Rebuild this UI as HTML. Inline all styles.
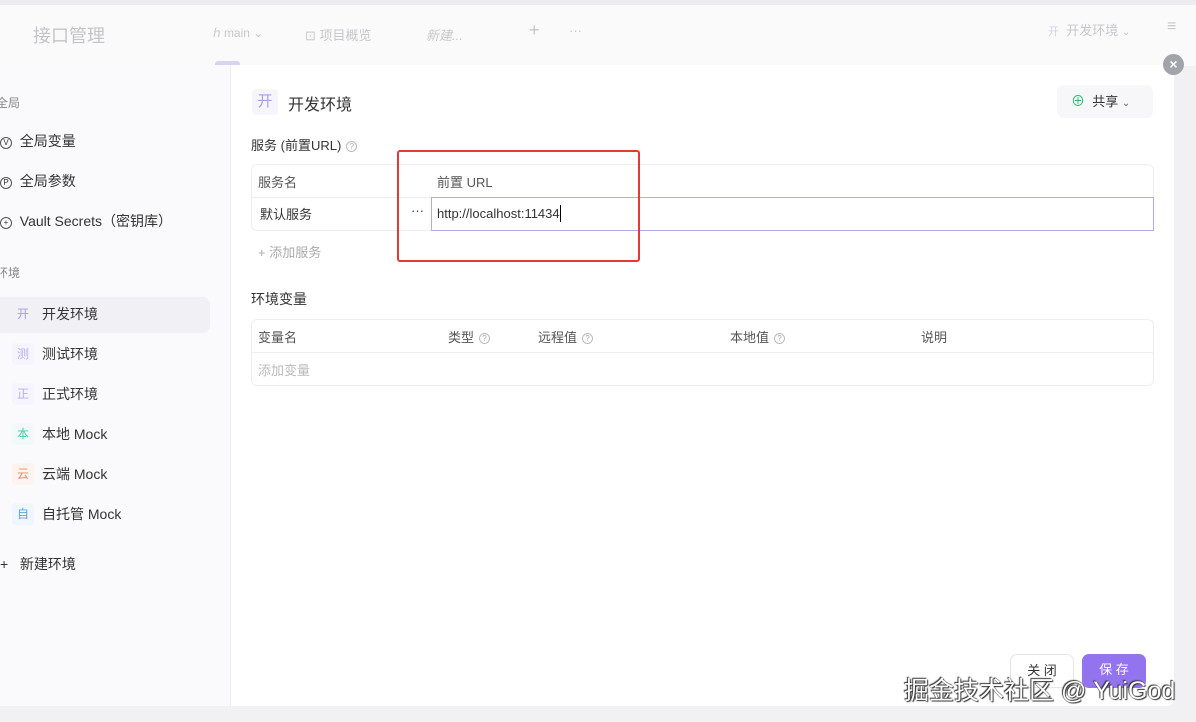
<!DOCTYPE html>
<html><head><meta charset="utf-8"><style>
*{box-sizing:border-box;margin:0;padding:0}
body{width:1196px;height:722px;overflow:hidden;background:#f1f1f3;font-family:"Liberation Sans","Noto Sans CJK SC",sans-serif;color:#333;position:relative}
.top{position:absolute;left:0;top:0;width:1196px;height:66px;background:#fafafb}
.top .strip{position:absolute;left:0;top:0;width:1196px;height:5px;background:#ececef}
.t{position:absolute;color:#c8c8cc;white-space:nowrap}
.modal{position:absolute;left:0;top:65px;width:1174px;height:641px;background:#fff;border-radius:0 0 8px 0}
.side{position:absolute;left:0;top:0;width:231px;height:641px;background:#fafafc;border-right:1px solid #eeeef0}
.s{position:absolute;font-size:14px;color:#333;white-space:nowrap}
.g{position:absolute;font-size:12px;color:#888}
.ic{position:absolute;font-size:12px;width:22px;height:22px;line-height:22px;text-align:center;border-radius:4px}
.sel{position:absolute;left:0;top:232px;width:210px;height:36px;background:#f1f1f5;border-radius:0 8px 8px 0}
.tbl{position:absolute;border:1px solid #eeeef0;border-radius:6px}
.h{position:absolute;font-size:13px;color:#555;white-space:nowrap}
.q{display:inline-block;width:11px;height:11px;border:1px solid #bbb;border-radius:50%;font-size:8px;line-height:9px;text-align:center;color:#aaa;margin-left:5px;vertical-align:1px}
.ci{border:1px solid #555;border-radius:50%;display:inline-block;width:12px;height:12px;line-height:10px;text-align:center;font-size:8px;vertical-align:1px}
</style></head><body>
<div class="top"><div class="strip"></div>
<div class="t" style="left:33px;top:22px;font-size:18px;color:#c4c4c8">接口管理</div>
<div class="t" style="left:213px;top:26px;font-size:12px">ℎ main ⌄</div>
<div class="t" style="left:305px;top:25px;font-size:13px">⊡ 项目概览</div>
<div class="t" style="left:426px;top:25px;font-size:13px;font-style:italic">新建...</div>
<div class="t" style="left:529px;top:20px;font-size:18px">+</div>
<div class="t" style="left:569px;top:23px;font-size:13px">···</div>
<div style="position:absolute;left:215px;top:61px;width:25px;height:5px;background:#d8d4ee;border-radius:3px 3px 0 0"></div>
<div class="t" style="left:1048px;top:20px;font-size:13px"><span style="font-size:11px;color:#d4d0ec">开</span> &nbsp;开发环境 <span style="font-size:10px">⌄</span></div>
<div class="t" style="left:1167px;top:18px;font-size:16px">≡</div>
</div>
<div class="modal">
<div class="side">
<div class="g" style="left:-4px;top:29px">全局</div>
<div class="s" style="left:0px;top:66px"><span class="ci">V</span>&nbsp; 全局变量</div>
<div class="s" style="left:0px;top:106px"><span class="ci">P</span>&nbsp; 全局参数</div>
<div class="s" style="left:0px;top:146px"><span class="ci">+</span>&nbsp; Vault Secrets（密钥库）</div>
<div class="g" style="left:-4px;top:199px">环境</div>
<div class="sel"></div>
<div class="ic" style="left:12px;top:238px;color:#a89ee0">开</div><div class="s" style="left:42px;top:239px">开发环境</div>
<div class="ic" style="left:12px;top:278px;color:#b8aee8;background:#f6f4fd">测</div><div class="s" style="left:42px;top:279px">测试环境</div>
<div class="ic" style="left:12px;top:318px;color:#b8aee8;background:#f6f4fd">正</div><div class="s" style="left:42px;top:319px">正式环境</div>
<div class="ic" style="left:12px;top:358px;color:#4cc9b0;background:#f0faf8">本</div><div class="s" style="left:42px;top:359px">本地 Mock</div>
<div class="ic" style="left:12px;top:398px;color:#f08a5d;background:#fdf4f0">云</div><div class="s" style="left:42px;top:399px">云端 Mock</div>
<div class="ic" style="left:12px;top:438px;color:#5aa7e6;background:#f0f6fd">自</div><div class="s" style="left:42px;top:439px">自托管 Mock</div>
<div class="s" style="left:0px;top:489px">+ &nbsp;&nbsp;新建环境</div>
</div>
<div class="ic" style="left:252px;top:24px;width:26px;height:26px;line-height:26px;font-size:15px;color:#a89ee0;background:#f6f5fb">开</div>
<div class="s" style="left:288px;top:26px;font-size:16px">开发环境</div>
<div style="position:absolute;left:1057px;top:20px;width:96px;height:33px;background:#f7f7f9;border-radius:7px;font-size:13px;line-height:33px;padding-left:14px"><span style="color:#2dbb73;font-size:14px">⊕</span>&nbsp; 共享 <span style="font-size:10px;color:#666">⌄</span></div>
<div class="s" style="left:251px;top:70px;font-size:13px">服务 (前置URL)<span class="q">?</span></div>
<div class="tbl" style="left:251px;top:99px;width:903px;height:67px"></div>
<div style="position:absolute;left:252px;top:132px;width:902px;height:1px;background:#eeeef0"></div>
<div class="h" style="left:258px;top:107px">服务名</div>
<div class="h" style="left:437px;top:107px">前置 URL</div>
<div class="h" style="left:260px;top:139px;color:#333">默认服务</div>
<div class="h" style="left:411px;top:138px;color:#333">···</div>
<div style="position:absolute;left:431px;top:132px;width:723px;height:34px;border:1px solid #b5a9e0;background:#fff;font-size:13px;line-height:32px;padding-left:5px;color:#333">http://localhost:11434<span style="display:inline-block;width:1px;height:17px;background:#000;vertical-align:-4px"></span></div>
<div class="h" style="left:258px;top:177px;color:#aaa">+ 添加服务</div>
<div style="position:absolute;left:397px;top:85px;width:243px;height:112px;border:2px solid #e53935;border-radius:3px"></div>
<div class="s" style="left:251px;top:224px">环境变量</div>
<div class="tbl" style="left:251px;top:254px;width:903px;height:67px"></div>
<div style="position:absolute;left:252px;top:287px;width:902px;height:1px;background:#eeeef0"></div>
<div class="h" style="left:258px;top:262px">变量名</div>
<div class="h" style="left:448px;top:262px">类型<span class="q">?</span></div>
<div class="h" style="left:538px;top:262px">远程值<span class="q">?</span></div>
<div class="h" style="left:730px;top:262px">本地值<span class="q">?</span></div>
<div class="h" style="left:921px;top:262px">说明</div>
<div class="h" style="left:258px;top:295px;color:#bbb">添加变量</div>
<div style="position:absolute;left:1010px;top:589px;width:64px;height:34px;border:1px solid #e6e6ea;border-radius:7px;font-size:13px;text-align:center;line-height:32px">关 闭</div>
<div style="position:absolute;left:1082px;top:589px;width:64px;height:34px;background:#9373ee;border-radius:7px;font-size:13px;color:#fff;text-align:center;line-height:32px">保 存</div>
</div>
<div style="position:absolute;left:1163px;top:54px;width:21px;height:21px;border-radius:50%;background:#a3a3ab;color:#fff;font-size:14px;text-align:center;line-height:21px;font-weight:bold">×</div>
<div style="position:absolute;left:904px;top:671px;font-size:25px;color:#fff;white-space:nowrap;text-shadow:0 0 1px #333,1px 1px 1px #333,-1px -1px 1px #333">掘金技术社区 @ YuiGod</div>
</body></html>
